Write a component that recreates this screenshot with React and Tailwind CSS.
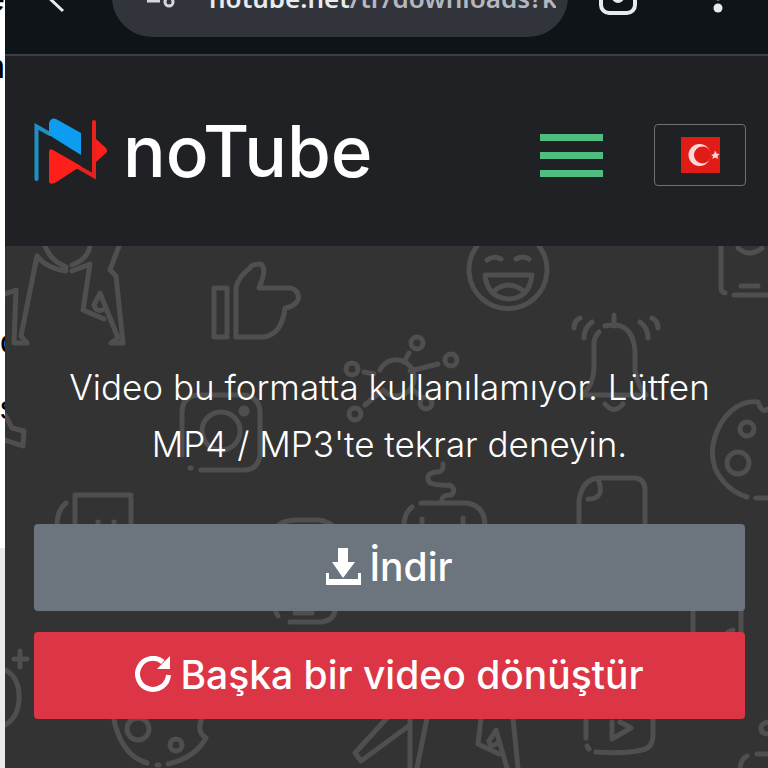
const sideLetters = [
  { id: 'a', char: 'e', className: 'h-[14px] justify-end' },
  { id: 'b', char: 'n', className: 'mt-[37px] h-[30px] justify-end' },
  { id: 'c', char: 'o', className: 'mt-[245px] h-[30px] justify-start' },
  { id: 'd', char: 's', className: 'mt-[36px] h-[30px] justify-start' },
];

function SideStrip() {
  return (
    <aside className="flex w-[5px] shrink-0 flex-col overflow-hidden bg-white text-black">
      {sideLetters.map((l) => (
        <span
          key={l.id}
          className={`flex items-end font-['Liberation_Sans',sans-serif] text-[34px] leading-[30px] ${l.className}`}
        >
          {l.char}
        </span>
      ))}
      <div className="mt-[126px] grow bg-[#e9eaec]" />
    </aside>
  );
}

function BrowserBar() {
  return (
    <header className="flex h-[56px] flex-col justify-end overflow-hidden border-b-2 border-[#3c3f43] bg-[#0f1418]">
      <div className="mb-[17px] flex h-20 shrink-0 items-center pr-[34px]">
        <button type="button" aria-label="Geri" className="flex w-[107px] shrink-0 justify-center pr-5">
          <svg viewBox="0 0 40 40" className="h-10 w-10" fill="none" stroke="#e8eaed" strokeWidth="3">
            <path d="M34 4 L18 19 L34 34" />
          </svg>
        </button>
        <div className="flex h-20 min-w-0 grow items-center gap-8 rounded-[40px] bg-[#31343b] pl-[33px] pr-3">
          <svg viewBox="0 0 32 28" className="h-7 w-8 shrink-0" fill="none" stroke="#d5d7da" strokeWidth="3">
            <circle cx="7" cy="6" r="4" />
            <path d="M15 6 H30 M2 18 H15" />
            <circle cx="24" cy="19" r="4" />
          </svg>
          <p className="overflow-hidden whitespace-nowrap pt-0.5 font-['Noto_Sans',sans-serif] text-[26px] font-semibold text-[#b4b8be]">
            <span className="text-[#e8eaed]">notube.net</span>/tr/downloads?k
          </p>
        </div>
        <button type="button" aria-label="Sekmeler" className="ml-[31px] shrink-0">
          <svg viewBox="0 0 38 36" className="h-9 w-[38px]" fill="none" stroke="#e8eaed" strokeWidth="4">
            <rect x="2" y="2" width="34" height="32" rx="8" />
            <circle cx="19" cy="18" r="4" />
          </svg>
        </button>
        <button type="button" aria-label="Menü" className="ml-[65px] shrink-0">
          <svg viewBox="0 0 32 32" className="h-8 w-8" fill="#e8eaed">
            <circle cx="16" cy="4" r="4.500" />
            <circle cx="16" cy="15" r="4.500" />
            <circle cx="16" cy="27" r="4.500" />
          </svg>
        </button>
      </div>
    </header>
  );
}

function Logo() {
  return (
    <a href="#" className="mb-2 flex items-center gap-4">
      <svg viewBox="0 0 73 68" className="h-[68px] w-[73px]">
        <path d="M2.500 62 V9.500 L16 17" fill="none" stroke="#1f8fc4" strokeWidth="4" strokeLinecap="round" />
        <path d="M15 6 Q17 0 22 2 L47 16 V38 L15 18 Z" fill="#0c9df0" />
        <path d="M60 5 V59 L44 50" fill="none" stroke="#e8211d" strokeWidth="4" strokeLinecap="round" />
        <path d="M62 22 L72 31 Q74 34 72 36 L62 45 Z" fill="#ff1f1a" />
        <path d="M15 35 Q15 31 19 33 L47 49 L21 66 Q15 68 15 64 Z" fill="#ff1f1a" />
      </svg>
      <span className="font-['Inter',sans-serif] text-[71px] font-medium leading-[80px] text-white">noTube</span>
    </a>
  );
}

function TurkishFlag() {
  return (
    <svg viewBox="0 0 39 36" className="h-9 w-[39px]">
      <rect width="39" height="36" fill="#e01c17" />
      <circle cx="18.500" cy="18" r="11" fill="#fbd9d8" />
      <circle cx="21.500" cy="18" r="8.500" fill="#e01c17" />
      <path d="M30 18 L33 17 L34 13.500 L35.500 16.500 L38.500 17 L36.500 19 L37 22 L34 20.500 L31.500 22 L32 19 Z" fill="#fbd9d8" />
    </svg>
  );
}

function Navbar() {
  return (
    <nav className="flex h-[190px] items-center bg-[#202124] pl-[29px] pr-[22px] pt-2">
      <Logo />
      <button type="button" aria-label="Menüyü aç" className="ml-auto flex w-[63px] flex-col gap-[11px]">
        <span className="h-[7px] w-full bg-[#4fbd7f]" />
        <span className="h-[7px] w-full bg-[#4fbd7f]" />
        <span className="h-[7px] w-full bg-[#4fbd7f]" />
      </button>
      <button
        type="button"
        aria-label="Türkçe"
        className="ml-[51px] flex h-[62px] w-[92px] items-center justify-center rounded border border-[#6f7275]"
      >
        <TurkishFlag />
      </button>
    </nav>
  );
}

function Doodles() {
  return (
    <svg
      viewBox="5 246 763 522"
      preserveAspectRatio="xMinYMin slice"
      aria-hidden="true"
      className="absolute inset-0 h-full w-full"
      fill="none"
      stroke="#4f4f4f"
      strokeWidth="5"
      strokeLinecap="round"
      strokeLinejoin="round"
    >
      {/* dancers */}
      <path d="M5 294 L16 290 L14 343 H27 L21 336 L37 256 Q46 268 66 271 M45 246 Q50 260 66 267 M72 265 Q88 259 90 246 M72 271 L90 264 L83 310 L104 319 M119 246 L110 270 L116 276 L123 343 H111 L118 338 L100 293 L94 305 Q96 312 102 310" />
      <path d="M5 415 L12 428 L24 431 L23 446 L5 440" />
      {/* thumbs up */}
      <path d="M214 288 H227 V337 H214 Z M236 337 V288 Q238 277 250 268 Q251 264 261 264 Q266 268 262 280 L259 288 H291 Q300 291 298 300 Q294 307 285 308 Q282 334 264 337 Z" />
      {/* smiley */}
      <path d="M477 246 A39 39 0 1 0 539 246 M487 260 Q494 255 501 259 M516 259 Q523 255 529 259 M485 275 H532 Q529 299 508 299 Q487 297 485 275 M493 292 Q508 278 525 292" />
      {/* bot */}
      <path d="M721 246 V288 Q721 292 725 293 M734 295 H768 M741 286 H758 M738 248 Q749 258 762 248" />
      {/* network */}
      <circle cx="417" cy="343" r="6" />
      <circle cx="451" cy="360" r="6" />
      <circle cx="352" cy="369" r="6" />
      <circle cx="355" cy="414" r="6" />
      <circle cx="426" cy="403" r="6" />
      <path d="M409 353 L404 362 M410 371 L438 364 M364 372 L374 374 M365 405 L380 392 M420 396 L411 388 M380 370 A18 18 0 1 1 383 390" />
      {/* bell */}
      <path d="M614 315 V326 M605 326 Q632 320 635 350 V370 Q637 385 646 395 H582 Q594 385 594 365 V342 Q595 336 599 332 M605 404 Q614 415 623 404 M574 328 Q574 321 580 318 M584 338 Q584 328 592 322 M640 322 Q648 328 648 338 M652 318 Q658 321 658 328" />
      {/* camera */}
      <path d="M182 455 V413 Q182 395 200 395 H244 Q260 397 260 413 V455 Q258 470 244 470 H201 M191 468 H190" />
      <circle cx="221" cy="431" r="19" />
      <circle cx="244" cy="411" r="3" fill="#4f4f4f" />
      {/* palette right */}
      <path d="M768 409 Q762 414 758 402 Q735 400 720 425 Q708 447 715 468 Q725 490 747 497 M756 498 H768" />
      <circle cx="747" cy="429" r="7" />
      <circle cx="738" cy="463" r="11" />
      {/* pages */}
      <path d="M75 530 V495 H131 V530 M66 503 Q56 511 57 530 M98 525 V522 M114 525 V522" />
      <path d="M274 530 Q280 520 297 520 H318 Q330 521 336 530" />
      {/* gamepad */}
      <path d="M443 464 Q444 473 435 472 Q424 475 430 483 Q438 486 450 485 Q457 490 451 495 Q441 495 442 501 M404 526 Q404 513 412 507 M421 503 H467 Q485 506 485 526 M422 519 V524 M463 518 V523" />
      {/* folded page */}
      <path d="M579 530 V500 Q583 478 600 478 H635 Q645 479 645 490 V530 M598 479 Q606 499 588 499" />
      {/* pieces between the buttons */}
      <path d="M276 612 L278 616 M290 622 H322 Q334 620 335 610 M295 613 H312" />
      <path d="M693 606 V640 M741 606 V640 M728 632 L733 630" />
      {/* planet and spark */}
      <path d="M5 670 Q20 677 19 700 Q18 718 5 725 M20 651 V667 M14 659 H27" />
      {/* palette bottom */}
      <path d="M113 715 Q120 755 147 763 M157 765 H159 M168 764 Q195 758 206 738 Q196 732 202 718" />
      <circle cx="138" cy="729" r="11" />
      <circle cx="176" cy="745" r="6" />
      {/* legs */}
      <path d="M387 718 L355 753 L361 761 L410 725 M410 718 V768 M427 718 L417 768 M481 718 L478 744 L499 754 M513 718 L518 768 M507 768 L496 730 L489 741 Q490 748 496 744" />
      {/* video */}
      <path d="M586 716 V738 M587 746 L589 749 M596 752 Q625 754 642 750 Q653 748 653 735 V716 M612 722 V739 L631 728 L620 722" />
      <path d="M768 722 Q760 724 761 729 Q762 734 768 734 M740 768 Q741 759 747 756 M757 754 H768" />
    </svg>
  );
}

function DownloadIcon() {
  return (
    <svg viewBox="0 0 35 40" className="h-10 w-[35px]" fill="currentColor" aria-hidden="true">
      <path d="M12 0 H22 V14 H29 L17 30 L6 14 H12 Z" />
      <path d="M0 25 H3 V31 H32 V25 H35 V37 H0 Z" />
    </svg>
  );
}

function RepeatIcon() {
  return (
    <svg viewBox="0 0 37 40" className="h-10 w-[37px]" aria-hidden="true">
      <path d="M33.500 19 A15.500 15.500 0 1 1 28 6" fill="none" stroke="currentColor" strokeWidth="5" />
      <path d="M35 0 V13 H22 Z" fill="currentColor" />
    </svg>
  );
}

export default function App() {
  return (
    <div className="flex min-h-screen bg-[#333333]">
      <SideStrip />
      <div className="flex min-w-0 grow flex-col">
        <BrowserBar />
        <Navbar />
        <main className="relative grow overflow-hidden bg-[#333333] pl-[29px] pr-[23px] pt-[113px] pb-12 font-['Inter',sans-serif] text-white">
          <Doodles />
          <div className="relative">
            <p className="text-center text-[35px] font-light leading-[57px]">
              Video bu formatta kullanılamıyor. Lütfen MP4 / MP3'te tekrar deneyin.
            </p>
            <div className="mt-[51px] flex flex-col gap-[21px]">
              <button
                type="button"
                className="flex h-[87px] items-center justify-center gap-2 rounded bg-[#6c757d] text-[39px] font-medium"
              >
                <DownloadIcon />
                İndir
              </button>
              <button
                type="button"
                className="flex h-[87px] items-center justify-center gap-2 rounded bg-[#dc3545] text-[39px] font-medium"
              >
                <RepeatIcon />
                Başka bir video dönüştür
              </button>
            </div>
          </div>
        </main>
      </div>
    </div>
  );
}
